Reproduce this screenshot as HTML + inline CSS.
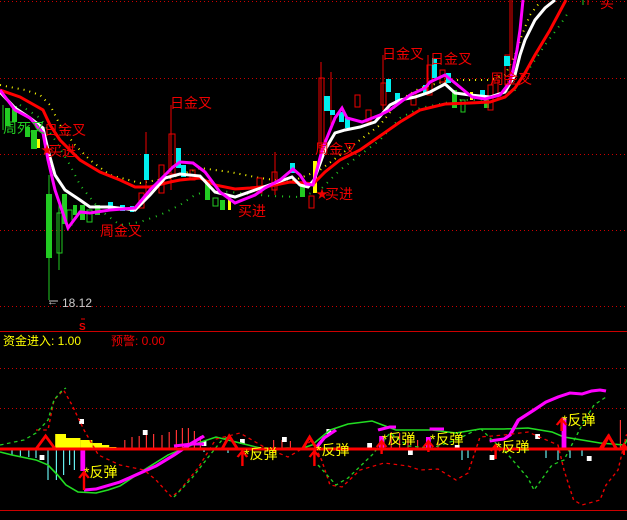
<!DOCTYPE html>
<html><head><meta charset="utf-8"><style>
html,body{margin:0;padding:0;background:#000;width:627px;height:520px;overflow:hidden}
svg{display:block}
text{font-family:"Liberation Sans","Noto Sans CJK SC",sans-serif}
</style></head><body>
<svg width="627" height="520" viewBox="0 0 627 520" xmlns="http://www.w3.org/2000/svg">
<rect width="627" height="520" fill="#000"/>
<g stroke="#c00" stroke-width="1" stroke-dasharray="1,3">
<line x1="0" y1="1.5" x2="627" y2="1.5"/>
<line x1="0" y1="78.5" x2="627" y2="78.5"/>
<line x1="0" y1="154.5" x2="627" y2="154.5"/>
<line x1="0" y1="230.5" x2="627" y2="230.5"/>
<line x1="0" y1="306.5" x2="627" y2="306.5"/>
<line x1="0" y1="368.5" x2="627" y2="368.5"/>
<line x1="0" y1="408.5" x2="627" y2="408.5"/>
</g>
<line x1="0" y1="331.5" x2="627" y2="331.5" stroke="#c00"/>
<line x1="0" y1="510.5" x2="627" y2="510.5" stroke="#c00"/>

<polyline fill="none" stroke="#ff0" stroke-width="2" stroke-dasharray="1,5" points="0,85 25,90 40,95 50,105 60,125 75,145 90,160 110,175 140,183 170,178 200,168 230,172 260,178 290,182 305,176 320,170 340,155 360,140 380,125 400,100 420,88 450,80 470,80 490,80 505,75 515,55 522,35 530,15 540,2"/>
<polyline fill="none" stroke="#2c2" stroke-width="2" stroke-dasharray="1,6" points="20,105 40,118 55,140 70,165 80,185 100,210 120,225 140,222 160,215 180,205 195,195 210,190 240,193 270,196 300,197 320,190 340,170 360,155 380,140 400,118 420,108 440,104 460,100 480,100 500,95 515,90 525,75 535,60 545,45 560,25 570,10"/>

<g stroke-width="1">
<line x1="3" y1="105" x2="3" y2="130" stroke="#2c2"/>
<rect x="5" y="108" width="5" height="18" fill="#2c2"/>
<rect x="12" y="106" width="5" height="16" fill="#2c2"/>
<rect x="25" y="127" width="5" height="10" fill="#2c2"/>
<rect x="31" y="130" width="6" height="19" fill="#2c2"/>
<rect x="37" y="139" width="3" height="9" fill="#ff0"/>
<line x1="49" y1="175" x2="49" y2="300" stroke="#2c2"/>
<rect x="46" y="194" width="6" height="64" fill="#2c2"/>
<rect x="57" y="213" width="5" height="40" fill="none" stroke="#2c2"/>
<line x1="59" y1="200" x2="59" y2="270" stroke="#2c2"/>
<rect x="62" y="194" width="5" height="30" fill="#2c2"/>
<rect x="67" y="210" width="5" height="15" fill="none" stroke="#2c2"/>
<rect x="73" y="205" width="4" height="10" fill="#2c2"/>
<rect x="80" y="205" width="5" height="15" fill="#2c2"/>
<rect x="87" y="210" width="5" height="12" fill="none" stroke="#2c2"/>
<rect x="95" y="205" width="5" height="10" fill="#2c2"/>
<rect x="108" y="202" width="5" height="8" fill="#0ee"/>
<rect x="120" y="205" width="5" height="6" fill="#0ee"/>
<rect x="130" y="206" width="4" height="6" fill="#0ee"/>
<rect x="139" y="193" width="5" height="15" fill="none" stroke="#e00"/>
<line x1="146" y1="132" x2="146" y2="200" stroke="#e00"/>
<rect x="144" y="154" width="5" height="26" fill="#0ee"/>
<rect x="159" y="165" width="5" height="28" fill="none" stroke="#e00"/>
<line x1="171" y1="105" x2="171" y2="190" stroke="#e00"/>
<rect x="169" y="134" width="6" height="40" fill="none" stroke="#e00"/>
<rect x="176" y="148" width="5" height="20" fill="#0ee"/>
<rect x="181" y="165" width="5" height="12" fill="#0ee"/>
<rect x="190" y="170" width="5" height="10" fill="none" stroke="#e00"/>
<rect x="205" y="180" width="5" height="20" fill="#2c2"/>
<rect x="213" y="198" width="5" height="8" fill="none" stroke="#2c2"/>
<rect x="220" y="200" width="5" height="10" fill="#2c2"/>
<rect x="228" y="198" width="3" height="12" fill="#ff0"/>
<rect x="257" y="178" width="5" height="15" fill="none" stroke="#e00"/>
<line x1="275" y1="152" x2="275" y2="195" stroke="#e00"/>
<rect x="272" y="172" width="5" height="18" fill="none" stroke="#e00"/>
<rect x="290" y="163" width="5" height="10" fill="#0ee"/>
<rect x="300" y="185" width="5" height="12" fill="#2c2"/>
<rect x="309" y="196" width="5" height="12" fill="none" stroke="#e00"/>
<rect x="313" y="161" width="4" height="32" fill="#ff0"/>
<line x1="321" y1="62" x2="321" y2="150" stroke="#e00"/>
<rect x="319" y="78" width="5" height="70" fill="none" stroke="#e00"/>
<line x1="331" y1="72" x2="331" y2="130" stroke="#e00"/>
<rect x="324" y="96" width="6" height="15" fill="#0ee"/>
<rect x="330" y="110" width="5" height="5" fill="#0ee"/>
<rect x="339" y="112" width="5" height="10" fill="#0ee"/>
<rect x="345" y="118" width="5" height="10" fill="#0ee"/>
<rect x="355" y="95" width="5" height="12" fill="none" stroke="#e00"/>
<rect x="366" y="110" width="5" height="12" fill="none" stroke="#e00"/>
<line x1="383" y1="55" x2="383" y2="110" stroke="#e00"/>
<rect x="381" y="83" width="5" height="22" fill="none" stroke="#e00"/>
<rect x="386" y="79" width="5" height="13" fill="#0ee"/>
<rect x="395" y="93" width="5" height="8" fill="#0ee"/>
<rect x="411" y="93" width="5" height="12" fill="none" stroke="#e00"/>
<rect x="423" y="85" width="5" height="10" fill="#0ee"/>
<line x1="428" y1="55" x2="428" y2="95" stroke="#e00"/>
<rect x="427" y="65" width="5" height="30" fill="none" stroke="#e00"/>
<rect x="432" y="58" width="5" height="20" fill="#0ee"/>
<rect x="440" y="70" width="5" height="12" fill="none" stroke="#e00"/>
<rect x="446" y="73" width="5" height="10" fill="#0ee"/>
<rect x="452" y="90" width="5" height="18" fill="#2c2"/>
<rect x="461" y="100" width="4" height="12" fill="none" stroke="#2c2"/>
<rect x="470" y="92" width="3" height="8" fill="#ff0"/>
<rect x="480" y="90" width="5" height="8" fill="#0ee"/>
<rect x="484" y="100" width="5" height="8" fill="#2c2"/>
<rect x="488" y="85" width="5" height="25" fill="none" stroke="#e00"/>
<rect x="493" y="80" width="5" height="20" fill="none" stroke="#e00"/>
<line x1="510" y1="0" x2="510" y2="85" stroke="#e00"/>
<rect x="505" y="55" width="5" height="30" fill="none" stroke="#e00"/>
<line x1="512" y1="0" x2="512" y2="60" stroke="#e00"/>
<rect x="504" y="56" width="6" height="10" fill="#0ee"/>
<line x1="583" y1="0" x2="583" y2="5" stroke="#2c2"/>
<line x1="588" y1="0" x2="588" y2="5" stroke="#e00"/>
</g>

<polyline fill="none" stroke="#f00" stroke-width="3" points="0,90 20,97 43,110 50,125 60,140 80,160 100,172 120,180 135,187 150,187 170,182 180,180 200,178 215,185 235,189 250,188 270,186 290,182 305,183 313,184 325,172 340,160 360,150 380,136 400,122 420,110 445,104 470,103 490,102 505,97 515,88 525,73 535,55 550,30 566,0"/>
<polyline fill="none" stroke="#fff" stroke-width="3" points="0,92 15,108 30,118 43,128 48,150 55,175 65,190 80,200 90,207 110,207 135,210 150,195 165,178 180,174 200,176 215,192 235,197 255,190 275,183 292,177 300,185 308,187 314,180 325,150 335,133 345,130 360,127 375,122 390,105 400,100 415,97 430,92 445,84 455,93 470,95 490,97 505,92 515,75 520,55 525,40 535,20 545,8 555,0"/>
<polyline fill="none" stroke="#f0f" stroke-width="3" points="0,90 15,110 30,118 43,133 48,160 55,190 68,228 80,212 90,213 110,210 135,208 150,190 160,180 173,167 180,162 193,163 205,172 220,192 235,203 255,195 265,188 280,180 293,169 300,175 306,184 313,185 322,150 335,118 342,108 347,118 362,122 380,115 390,110 410,95 425,88 430,82 445,75 455,83 472,97 485,99 500,95 510,82 513,70 517,50 520,30 523,0"/>

<g fill="#e00" font-size="14">
<text x="170" y="108">日金叉</text>
<text x="44" y="135">日金叉</text>
<text x="48" y="156">买进</text>
<text x="100" y="236">周金叉</text>
<text x="238" y="216">买进</text>
<text x="315" y="154">周金叉</text>
<text x="325" y="199">买进</text>
<text x="382" y="59">日金叉</text>
<text x="430" y="64">日金叉</text>
<text x="490" y="84">周金叉</text>
<text x="600" y="8">买</text>
</g>
<text x="3" y="133" fill="#2c2" font-size="14">周死叉</text>
<text x="41" y="154" fill="#e00" font-size="12">★</text>
<text x="316" y="198" fill="#e00" font-size="12">★</text>
<line x1="49" y1="301" x2="58" y2="301" stroke="#ccc"/>
<text x="47" y="305" fill="#ccc" font-size="11">←</text>
<text x="62" y="307" fill="#ccc" font-size="12">18.12</text>
<text x="79" y="330" fill="#e00" font-size="10" font-weight="bold">S</text>
<line x1="81" y1="319" x2="85" y2="319" stroke="#e00"/>

<text x="3" y="345" fill="#ff0" font-size="12">资金进入: 1.00</text>
<text x="111" y="345" fill="#e00" font-size="12">预警: 0.00</text>

<g transform="matrix(1.2 0 0 1 0 0)">
<g stroke="#6ee" stroke-width="1">
<line x1="10" y1="449" x2="10" y2="455"/><line x1="17" y1="449" x2="17" y2="457"/><line x1="24" y1="449" x2="24" y2="457"/>
<line x1="30" y1="449" x2="30" y2="458"/><line x1="40" y1="449" x2="40" y2="480"/><line x1="47" y1="449" x2="47" y2="480"/>
<line x1="53" y1="449" x2="53" y2="475"/><line x1="58" y1="449" x2="58" y2="465"/><line x1="62" y1="449" x2="62" y2="470"/>
<line x1="170" y1="449" x2="170" y2="452"/><line x1="190" y1="449" x2="190" y2="453"/>
<line x1="385" y1="449" x2="385" y2="460"/><line x1="390" y1="449" x2="390" y2="458"/>
<line x1="455" y1="449" x2="455" y2="458"/><line x1="465" y1="449" x2="465" y2="460"/><line x1="475" y1="449" x2="475" y2="458"/><line x1="485" y1="449" x2="485" y2="456"/>
<line x1="590" y1="449" x2="590" y2="470"/><line x1="596" y1="449" x2="596" y2="472"/><line x1="602" y1="449" x2="602" y2="474"/><line x1="608" y1="449" x2="608" y2="468"/><line x1="614" y1="449" x2="614" y2="460"/>
</g>
<g fill="#ff0">
<rect x="46" y="434" width="9" height="15"/><rect x="55" y="438" width="12" height="11"/><rect x="67" y="440" width="10" height="9"/><rect x="77" y="443" width="8" height="6"/><rect x="85" y="445" width="6" height="4"/><rect x="91" y="447" width="6" height="2"/>
</g>
<g stroke="#f33" stroke-width="1">
<line x1="104" y1="440" x2="104" y2="449"/><line x1="110" y1="437" x2="110" y2="449"/><line x1="116" y1="436" x2="116" y2="449"/><line x1="122" y1="435" x2="122" y2="449"/><line x1="128" y1="434" x2="128" y2="449"/><line x1="135" y1="435" x2="135" y2="449"/><line x1="141" y1="432" x2="141" y2="449"/><line x1="147" y1="430" x2="147" y2="449"/><line x1="152" y1="428" x2="152" y2="449"/><line x1="157" y1="428" x2="157" y2="449"/><line x1="162" y1="431" x2="162" y2="449"/><line x1="167" y1="436" x2="167" y2="449"/>
<line x1="228" y1="440" x2="228" y2="449"/><line x1="235" y1="440" x2="235" y2="449"/><line x1="242" y1="441" x2="242" y2="449"/>
<line x1="320" y1="436" x2="320" y2="449"/><line x1="326" y1="432" x2="326" y2="449"/><line x1="333" y1="433" x2="333" y2="449"/><line x1="340" y1="436" x2="340" y2="449"/><line x1="348" y1="440" x2="348" y2="449"/><line x1="357" y1="442" x2="357" y2="449"/><line x1="365" y1="442" x2="365" y2="449"/>
<line x1="517" y1="420" x2="517" y2="449"/><line x1="523" y1="415" x2="523" y2="449"/><line x1="530" y1="420" x2="530" y2="449"/><line x1="537" y1="418" x2="537" y2="449"/><line x1="544" y1="422" x2="544" y2="449"/><line x1="552" y1="425" x2="552" y2="449"/><line x1="558" y1="430" x2="558" y2="449"/><line x1="565" y1="437" x2="565" y2="449"/>
</g>
<g fill="#fff">
<rect x="33" y="455" width="4" height="5"/><rect x="66" y="419" width="4" height="5"/><rect x="119" y="430" width="4" height="5"/><rect x="168" y="441" width="4" height="5"/><rect x="200" y="439" width="4" height="5"/>
<rect x="235" y="437" width="4" height="5"/><rect x="272" y="429" width="4" height="5"/><rect x="306" y="443" width="4" height="5"/><rect x="340" y="450" width="4" height="5"/><rect x="408" y="455" width="4" height="5"/><rect x="489" y="456" width="4" height="5"/><rect x="530" y="422" width="4" height="5"/><rect x="571" y="436" width="4" height="5"/><rect x="379" y="445" width="4" height="5"/><rect x="446" y="434" width="4" height="5"/><rect x="612" y="465" width="4" height="5"/>
</g>
<polyline fill="none" stroke="#2d2" stroke-width="1.5" points="0,452 10,455 30,460 40,465 48,475 55,485 65,492 80,493 90,490 100,486 120,470 140,455 160,445 180,437 200,443 220,449 240,448 250,449 260,445 275,430 290,424 310,421 330,430 360,430 380,433 400,429 420,429 440,428 460,432 470,437 490,441 500,443 520,445 535,416 545,404 560,400 580,394 590,400 600,410 605,420 620,431 627,432"/>
<polyline fill="none" stroke="#f0f" stroke-width="3" points="70,490 80,489 100,482 115,474 130,466 145,455 160,443 170,436"/>
<polyline fill="none" stroke="#f0f" stroke-width="3" points="145,446 160,444 170,444"/>
<polyline fill="none" stroke="#f0f" stroke-width="3" points="262,450 270,438 280,430"/>
<polyline fill="none" stroke="#f0f" stroke-width="3" points="315,430 325,427 330,427"/>
<polyline fill="none" stroke="#f0f" stroke-width="3" points="358,429 370,429"/>
<polyline fill="none" stroke="#f0f" stroke-width="3" points="408,441 420,439 425,435 432,420 445,410 455,402 465,397 475,393 485,394 493,391 500,390 505,391"/>
<polyline fill="none" stroke="#e00" stroke-width="1.2" stroke-dasharray="3,3" points="30,430 40,430 45,400 53,390 60,405 70,430 82,455 100,465 120,470 130,480 143,497 150,490 165,468 180,439 200,433 220,447 240,457 250,450 260,440 268,460 275,485 285,487 300,470 320,463 340,466 350,470 365,469 380,480 390,473 400,437 420,435 440,432 465,445 470,470 478,500 485,505 500,500 505,485 515,470 522,435 530,430 545,405 555,415 565,440 575,440 580,460 590,480 597,500 610,510"/>
<polyline fill="none" stroke="#2c2" stroke-width="1.2" stroke-dasharray="3,3" points="0,445 20,440 30,433 40,420 45,400 52,390 55,388"/>
<polyline fill="none" stroke="#2c2" stroke-width="1.2" stroke-dasharray="3,3" points="145,497 160,478 175,455 185,440 190,437"/>
<polyline fill="none" stroke="#2c2" stroke-width="1.2" stroke-dasharray="3,3" points="265,465 280,485 290,478 310,455 325,433 340,446 360,448 380,440 400,428 410,440 420,450 440,478 445,490 460,465 470,460 485,425 495,405 505,397"/>
<line x1="0" y1="449" x2="627" y2="449" stroke="#f00" stroke-width="3"/>
<g fill="none" stroke="#f00" stroke-width="2.5">
<polyline points="30,449 38,436 46,449"/>
<polyline points="185,449 191,436 198,449"/>
<polyline points="252,449 258,437 264,449"/>
<polyline points="500,449 507,436 514,449"/>
</g>
<g fill="#f0f"><rect x="67" y="449" width="4" height="22"/><rect x="316" y="436" width="4" height="13"/><rect x="355" y="437" width="4" height="12"/><rect x="468" y="418" width="4" height="31"/></g>
<g stroke="#f00" stroke-width="2" fill="none">
<path d="M70,472 L70,490 M66,478 L70,472 L74,478"/>
<path d="M202,452 L202,466 M198,457 L202,451 L206,457"/>
<path d="M262,452 L262,466 M258,457 L262,451 L266,457"/>
<path d="M318,442 L318,454 M314,447 L318,441 L322,447"/>
<path d="M357,442 L357,452 M353,447 L357,441 L361,447"/>
<path d="M413,446 L413,459 M409,451 L413,445 L417,451"/>
<path d="M468,420 L468,431 M464,425 L468,419 L472,425"/>
</g>
</g>
<line x1="0" y1="449" x2="627" y2="449" stroke="#f00" stroke-width="3"/>
<polyline fill="none" stroke="#f00" stroke-width="2.5" points="602,449 609,436 616,449"/>
<path d="M624,445 L624,455 M620,450 L624,444 L628,450" stroke="#f00" stroke-width="2" fill="none"/>
<g fill="#ff0" font-size="14">
<text x="84" y="477">*反弹</text>
<text x="244" y="459">*反弹</text>
<text x="316" y="455">*反弹</text>
<text x="382" y="444">*反弹</text>
<text x="430" y="444">*反弹</text>
<text x="496" y="452">*反弹</text>
<text x="562" y="425">*反弹</text>
</g>
</svg>
</body></html>
